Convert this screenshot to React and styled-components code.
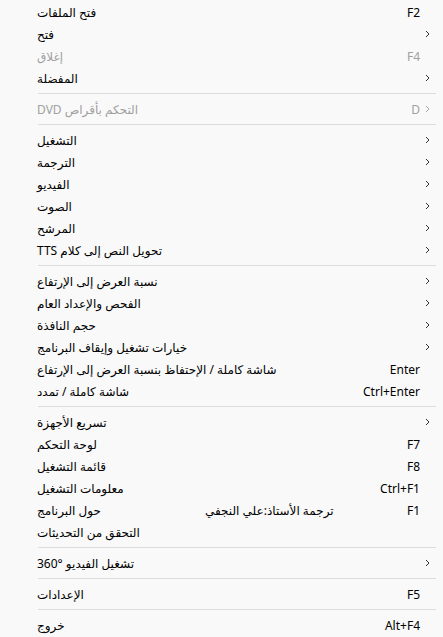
import styled, { createGlobalStyle } from "styled-components"

const GlobalStyle = createGlobalStyle`
  html, body {
    margin: 0;
    padding: 0;
    background: #f9f9f9;
  }
  body {
    font-family: "Noto Sans", "DejaVu Sans", sans-serif;
    font-size: 12px;
    color: #000;
  }
`

const items = [
    { label: 'فتح الملفات', key: 'F2' },
    { label: 'فتح', sub: true },
    { label: 'إغلاق', key: 'F4', disabled: true },
    { label: 'المفضلة', sub: true },
    { sep: true },
    { label: 'التحكم بأقراص DVD', key: 'D', sub: true, disabled: true },
    { sep: true },
    { label: 'التشغيل', sub: true },
    { label: 'الترجمة', sub: true },
    { label: 'الفيديو', sub: true },
    { label: 'الصوت', sub: true },
    { label: 'المرشح', sub: true },
    { label: 'تحويل النص إلى كلام TTS', sub: true },
    { sep: true },
    { label: 'نسبة العرض إلى الإرتفاع', sub: true },
    { label: 'الفحص والإعداد العام', sub: true },
    { label: 'حجم النافذة', sub: true },
    { label: 'خيارات تشغيل وإيقاف البرنامج', sub: true },
    { label: 'شاشة كاملة / الإحتفاظ بنسبة العرض إلى الإرتفاع', key: 'Enter' },
    { label: 'شاشة كاملة / تمدد', key: 'Ctrl+Enter' },
    { sep: true },
    { label: 'تسريع الأجهزة', sub: true },
    { label: 'لوحة التحكم', key: 'F7' },
    { label: 'قائمة التشغيل', key: 'F8' },
    { label: 'معلومات التشغيل', key: 'Ctrl+F1' },
    { label: 'حول البرنامج', note: 'ترجمة الأستاذ:علي النجفي', key: 'F1' },
    { label: 'التحقق من التحديثات' },
    { sep: true },
    { label: 'تشغيل الفيديو °360', sub: true },
    { sep: true },
    { label: 'الإعدادات', key: 'F5' },
    { sep: true },
    { label: 'خروج', key: 'Alt+F4' },
]

const Chevron = ({ color }) => (
    <svg width="5" height="8" viewBox="0 0 5 8">
        <path d="M1 1 L4 4 L1 7" fill="none" stroke={color} strokeWidth="1" />
    </svg>
)

export default function App() {
    return <>
        <GlobalStyle />
        <Menu>
            {items.map((it, i) => it.sep
                ? <Separator key={i} />
                : <Row key={i} $disabled={it.disabled}>
                    <Label dir="rtl" $wide={!it.note}>{it.label}</Label>
                    {it.note && <Note dir="rtl">{it.note}</Note>}
                    <Shortcut>{it.key}</Shortcut>
                    <Arrow>{it.sub && <Chevron color={it.disabled ? '#a8a8a8' : '#333'} />}</Arrow>
                </Row>
            )}
        </Menu>
    </>
}

const Menu = styled.div`
display: flex;
flex-direction: column;
padding-top: 1px;
width: 443px;
`
const Row = styled.div`
display: grid;
grid-template-columns: 168px 1fr auto 10px;
align-items: center;
height: 22px;
padding: 0 13px 0 37px;
color: ${p => p.$disabled ? '#a0a0a0' : '#000'};
white-space: nowrap;
`
const Label = styled.span`
grid-column: ${p => p.$wide ? '1 / 3' : '1 / 2'};
text-align: right;
justify-self: start;
`
const Note = styled.span`
grid-column: 2 / 3;
justify-self: start;
`
const Shortcut = styled.span`
grid-column: 3 / 4;
text-align: right;
`
const Arrow = styled.span`
grid-column: 4 / 5;
display: flex;
justify-content: flex-end;
align-items: center;
`
const Separator = styled.div`
height: 1px;
background: #dcdcdc;
margin: 4px 7px 4px 38px;
`
